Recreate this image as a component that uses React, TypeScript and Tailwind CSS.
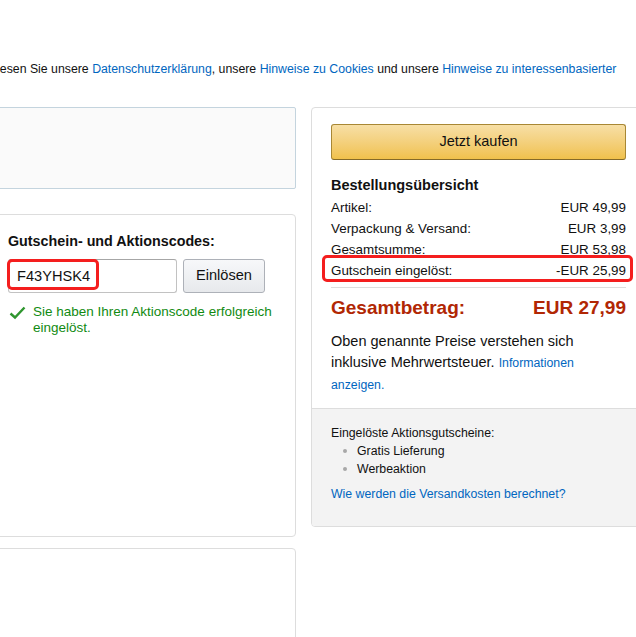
import React from "react";

const rows = [
  { label: "Artikel:", value: "EUR 49,99" },
  { label: "Verpackung & Versand:", value: "EUR 3,99" },
  { label: "Gesamtsumme:", value: "EUR 53,98" },
];

const App: React.FunctionComponent = () => {
  return (
    <div
      className="w-[636px] h-[637px] overflow-hidden bg-white text-[#111]"
      style={{ fontFamily: '"Liberation Sans", Arial, sans-serif' }}
    >
      {/* Legal line */}
      <div className="pt-[61px] -ml-[7px] whitespace-nowrap text-[12.3px] leading-[16px]">
        Lesen Sie unsere <a className="text-[#0066c0]">Datenschutzerklärung</a>, unsere{" "}
        <a className="text-[#0066c0]">Hinweise zu Cookies</a> und unsere{" "}
        <a className="text-[#0066c0]">Hinweise zu interessenbasierter</a>
      </div>

      <div className="flex gap-[15px] -ml-[10px] mt-[30px]">
        {/* Left column */}
        <div className="w-[306px] shrink-0 flex flex-col">
          <div className="h-[82px] border border-[#c4d4de] bg-[#fafafa] rounded-[2px]" />

          <div className="mt-[25px] h-[323px] border border-[#dddddd] rounded-[4px] pt-[17px] pl-[17px]">
            <p className="text-[14.3px] font-bold leading-[18px]">Gutschein- und Aktionscodes:</p>
            <div className="mt-[9px] flex gap-[6px]">
              <div className="relative">
                <input
                  readOnly
                  value="F43YHSK4"
                  className="w-[169px] h-[34px] border border-[#c2c2c2] border-t-[#a6a6a6] rounded-[3px] pl-[8px] text-[14.6px] text-[#111] bg-white outline-none"
                  style={{ fontFamily: '"Liberation Sans", Arial, sans-serif' }}
                />
                <div className="absolute left-[-1px] top-0 w-[92px] h-[31px] border-[3px] border-[#f41e1e] rounded-[5px] pointer-events-none" />
              </div>
              <button className="w-[82px] h-[34px] border border-[#adb1b8] rounded-[3px] bg-linear-to-b from-[#f7f8fa] to-[#e7e9ec] text-[14.6px] text-[#111]">
                Einlösen
              </button>
            </div>
            <div className="mt-[11px] flex gap-[7px] text-[13.5px] leading-[16px] text-[#118a11]">
              <svg width="17" height="14" viewBox="0 0 17 14" className="mt-[2px] shrink-0 ml-[1px]">
                <path d="M1.5 7.5 L6 11.5 L15.5 1.5" fill="none" stroke="#2f962f" strokeWidth="2.4" />
              </svg>
              <p>
                Sie haben Ihren Aktionscode erfolgreich
                <br />
                eingelöst.
              </p>
            </div>
          </div>

          <div className="mt-[11px] h-[120px] border border-[#dddddd] rounded-[4px]" />
        </div>

        {/* Right column */}
        <div className="w-[335px] shrink-0">
          <div className="border border-[#dddddd] rounded-[4px] overflow-hidden">
            <div className="pt-[16px] px-[19px] pb-[12px]">
              <button className="w-full h-[36px] border border-[#a88734] border-b-[#846a29] rounded-[3px] bg-linear-to-b from-[#f7dfa5] to-[#f0c14b] text-[14.5px] text-[#111]">
                Jetzt kaufen
              </button>

              <p className="mt-[16px] text-[14.5px] font-bold leading-[18px]">Bestellungsübersicht</p>

              <div className="mt-[3px] text-[13.4px] leading-[21px]">
                {rows.map((row) => (
                  <div key={row.label} className="flex justify-between">
                    <span>{row.label}</span>
                    <span>{row.value}</span>
                  </div>
                ))}
                <div className="relative flex justify-between">
                  <span>Gutschein eingelöst:</span>
                  <span>-EUR 25,99</span>
                  <div className="absolute left-[-9px] right-[-7px] top-[-5px] bottom-[-1px] border-[3px] border-[#f41e1e] rounded-[5px]" />
                </div>
              </div>

              <div className="mt-[6px] border-t border-[#dddddd]" />

              <div className="mt-[8px] flex justify-between text-[19px] font-bold leading-[24px] text-[#b12704]">
                <span>Gesamtbetrag:</span>
                <span>EUR 27,99</span>
              </div>

              <p className="mt-[11px] text-[14.5px] leading-[21px]">
                Oben genannte Preise verstehen sich inklusive Mehrwertsteuer.{" "}
                <a className="text-[12.3px] text-[#0066c0]">Informationen anzeigen.</a>
              </p>
            </div>

            <div className="border-t border-[#dddddd] bg-[#f3f3f3] pt-[15px] pb-[23px] px-[19px] text-[12.3px] leading-[18px]">
              <p>Eingelöste Aktionsgutscheine:</p>
              <ul>
                {["Gratis Lieferung", "Werbeaktion"].map((item) => (
                  <li key={item} className="flex items-center">
                    <span className="ml-[12px] w-[4px] h-[4px] rounded-full bg-[#a8a8a8]" />
                    <span className="ml-[10px]">{item}</span>
                  </li>
                ))}
              </ul>
              <a className="block mt-[7px] text-[#0066c0]">Wie werden die Versandkosten berechnet?</a>
            </div>
          </div>
        </div>
      </div>
    </div>
  );
};

export default App;
